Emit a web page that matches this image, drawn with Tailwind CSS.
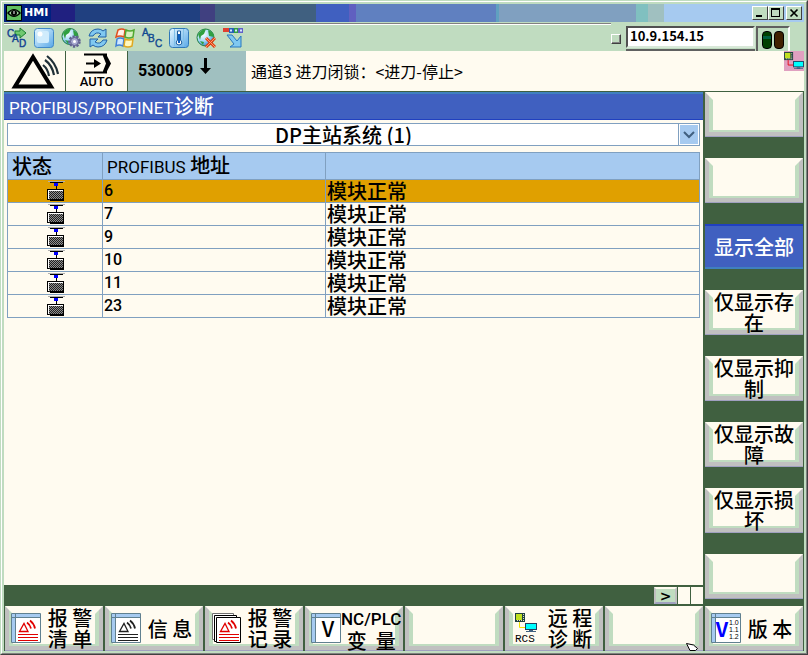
<!DOCTYPE html>
<html lang="zh-CN">
<head>
    <meta charset="UTF-8">
    <meta name="viewport" content="width=device-width, initial-scale=1.0">
    <title>HMI</title>
    <script src="https://cdn.jsdelivr.net/npm/@tailwindcss/browser@4"></script>
</head>
<body class="bg-[#c0dcc0] font-['Noto_Sans_CJK_SC',sans-serif] font-medium text-black">
    <!-- Shared icons -->
    <svg class="absolute w-0 h-0">
        <defs>
            <pattern id="dots" width="2" height="2" patternUnits="userSpaceOnUse">
                <rect width="2" height="2" fill="#909090"/>
                <path d="M0 0h1v1H0zM1 1h1v1H1z" fill="#202020"/>
            </pattern>
            <radialGradient id="globe" cx="0.35" cy="0.3" r="0.8">
                <stop offset="0" stop-color="#ffffff"/>
                <stop offset="0.5" stop-color="#a8dcf8"/>
                <stop offset="1" stop-color="#2070c8"/>
            </radialGradient>
            <linearGradient id="glass" x1="0" y1="0" x2="1" y2="1">
                <stop offset="0" stop-color="#e8f8ff"/>
                <stop offset="1" stop-color="#58a8e8"/>
            </linearGradient>
        </defs>
        <symbol id="device" viewBox="0 0 18 20" shape-rendering="crispEdges">
            <path d="M1 0h17v1H1z" fill="#b0b0b0"/>
            <path d="M3 1h13v1H3zM9 2h1v6H9z" fill="#000"/>
            <path d="M7 2h4v3H7z" fill="#0000ff"/>
            <path d="M0 8h17v11H0z" fill="#000"/>
            <path d="M1 9h15v9H1z" fill="#fff"/>
            <path d="M2 10h14v9H2z" fill="url(#dots)"/>
            <path d="M3 20h14V9h-1v9H3z" fill="#000"/>
        </symbol>
        <symbol id="sheet" viewBox="0 0 30 30">
            <path d="M.5.5h29v29H.5z" fill="#fff" stroke="#608090"/>
            <path d="M1 1h28v3H1zM1 4h3v25H1z" fill="#a6caf0"/>
            <path d="M1 4.500h28M4.500 1v28" stroke="#608090"/>
        </symbol>
        <symbol id="alarm" viewBox="0 0 30 30" fill="none" stroke="currentColor">
            <path d="M8.500 18.500l4.500-8 4 8z" stroke-width="1.300"/>
            <path d="M16 9.500q3 2 4 6M19 7.500q4 3 5 8" stroke-width="1.800"/>
            <path d="M7 21.500h20M7 24.500h20M7 27.500h20" stroke-width="1"/>
        </symbol>
        <symbol id="sheets" viewBox="0 0 30 30">
            <path d="M1.500.500h21v26h-21z" fill="#fff" stroke="#707070"/>
            <path d="M3.500 2.500h22v26h-22z" fill="#fff" stroke="#000"/>
            <path d="M5.500 4.500h24v25h-24z" fill="#fff" stroke="#000"/>
        </symbol>
        <symbol id="network" viewBox="0 0 22 20">
            <path d="M0 0h10v9H0z" fill="#204040"/>
            <path d="M1 1h6v6H1z" fill="#c0e020"/>
            <path d="M8 1h1v1H8zM8 3h1v1H8zM8 5h1v1H8zM2 7h1v1H2zM4 7h1v1H4zM6 7h1v1H6zM8 7h1v1H8z" fill="#e0e0c0"/>
            <path d="M4.500 9v5.500H10" fill="none" stroke="currentColor"/>
            <path d="M10 10h12v7H10z" fill="#204060"/>
            <path d="M11 11h10v5H11z" fill="#00ffff"/>
            <path d="M14 17h4v1h-4zM11 18h10v1H11z" fill="#406080"/>
        </symbol>
    </svg>

    <div class="min-h-screen flex flex-col border border-t-[#c0dcc0] border-l-[#c0dcc0] border-r-[#404040] border-b-[#404040]">
        <div class="flex-1 flex flex-col border border-t-white border-l-white border-r-[#808080] border-b-[#808080] p-0.5">

            <!-- Title bar -->
            <header class="h-[18px] flex items-center justify-between pl-0.5 pr-0.5 bg-[linear-gradient(90deg,#002080_5.9%,#202080_5.9%_8.9%,#204080_8.9%_24.5%,#404080_24.5%_26.4%,#406080_26.4%_39%,#4060c0_39%_43.1%,#6060c0_43.1%_44%,#6080c0_44%_61.5%,#60a0c0_61.5%_61.9%,#80a0c0_61.9%_79%,#80c0c0_79%_80.5%,#a0c0c0_80.5%_82.5%,#a6caf0_82.5%)]">
                <div class="flex items-center gap-0.5">
                    <svg class="w-4 h-4" viewBox="0 0 16 16">
                        <rect width="16" height="16" rx="1" fill="#000"/>
                        <rect x="1" y="1" width="14" height="14" fill="#60c060"/>
                        <path d="M1 8q7-8 14 0q-7 8-14 0z" fill="#000"/>
                        <path d="M3 8q5-6 10 0q-5 6-10 0z" fill="#a0d8a0"/>
                        <circle cx="8" cy="8" r="3" fill="#000"/>
                        <path d="M8 6v3" stroke="#fff"/>
                    </svg>
                    <h1 class="font-['DejaVu_Sans',sans-serif] text-[11px] font-bold text-white">HMI</h1>
                </div>
                <div class="flex">
                    <button aria-label="Minimize" class="w-4 h-3.5 bg-[#c0dcc0] border border-t-white border-l-white border-r-[#404040] border-b-[#404040]">
                        <svg class="w-full h-full" viewBox="0 0 14 12"><path d="M3 8h6v2H3z"/></svg>
                    </button>
                    <button aria-label="Maximize" class="w-4 h-3.5 bg-[#c0dcc0] border border-t-white border-l-white border-r-[#404040] border-b-[#404040]">
                        <svg class="w-full h-full" viewBox="0 0 14 12"><path d="M2 1h9v9H2zM3 3v6h7V3z" fill-rule="evenodd"/></svg>
                    </button>
                    <button aria-label="Close" class="w-4 h-3.5 ml-0.5 bg-[#c0dcc0] border border-t-white border-l-white border-r-[#404040] border-b-[#404040]">
                        <svg class="w-full h-full" viewBox="0 0 14 12"><path d="M3.500 2.500l7 7m0-7l-7 7" stroke="#000" stroke-width="1.700"/></svg>
                    </button>
                </div>
            </header>

            <!-- Toolbar -->
            <div class="flex h-[29px] pr-3.5">
                <div class="flex-1 flex flex-col">
                    <div class="mt-px h-0.5 border-t border-b border-t-[#808080] border-b-white"></div>
                    <div class="flex items-center gap-[7px] pl-[3px] pt-[3px]">
                        <button aria-label="CAD">
                            <svg class="w-5 h-5 overflow-visible" viewBox="0 0 20 20">
                                <path d="M8 3h5V0l6 5-6 5V7H8z" fill="#70c870" stroke="#188030"/>
                                <g font-family="Liberation Sans" font-size="10" fill="#104090" stroke="#104090" stroke-width=".4"><text x="0" y="9">C</text><text x="5" y="14">A</text><text x="12" y="19">D</text></g>
                            </svg>
                        </button>
                        <button aria-label="Screen">
                            <svg class="w-5 h-5" viewBox="0 0 20 20">
                                <rect x=".5" y=".5" width="19" height="19" rx="3" fill="url(#glass)" stroke="#4088c8"/>
                                <rect x="3" y="3" width="12" height="12" rx="2" fill="#d0ecfc"/>
                                <circle cx="6" cy="6" r="2.500" fill="#fff"/>
                            </svg>
                        </button>
                        <button aria-label="Network settings">
                            <svg class="w-5 h-5" viewBox="0 0 20 20">
                                <circle cx="9" cy="8.500" r="8" fill="url(#globe)" stroke="#208040"/>
                                <path d="M2 5q4-5 8-4l-2 4-3 2-1 4zM12 2q5 2 5 7l-4-1zM4 12l4 1-1 3z" fill="#30a040"/>
                                <circle cx="13.500" cy="13.500" r="5" fill="#a0a0c8" stroke="#606090" stroke-width="2.500" stroke-dasharray="2.200 1.300"/>
                                <circle cx="13.500" cy="13.500" r="4" fill="#a8a8d0" stroke="#606090"/>
                                <circle cx="13.500" cy="13.500" r="1.500" fill="#fff"/>
                            </svg>
                        </button>
                        <button aria-label="Refresh">
                            <svg class="w-5 h-5" viewBox="0 0 20 20" fill="#80c8f0" stroke="#2060a8">
                                <path d="M1 8Q3 1 10 1q3 0 5 2l3-2v8h-8l3-3Q8 3 5 8z"/>
                                <path d="M19 12q-2 7-9 7-3 0-5-2l-3 2v-8h8l-3 3q5 3 8-2z"/>
                            </svg>
                        </button>
                        <button aria-label="Windows">
                            <svg class="w-5 h-5" viewBox="0 0 20 20" stroke-width="1.500">
                                <path d="M3 2q4-2 7 0L9 9Q5 7 1 9z" fill="#fff0e8" stroke="#e05020"/>
                                <path d="M11 2q4 2 8 0l-1 7q-4 2-8 0z" fill="#d8f0c0" stroke="#50a830"/>
                                <path d="M2 11q3-2 7 0l-1 7q-4-2-7 0z" fill="#d0e8ff" stroke="#4080d8"/>
                                <path d="M10 11q4 2 8 0l-1 7q-4 2-8 0z" fill="#fff8c0" stroke="#e0a820"/>
                            </svg>
                        </button>
                        <button aria-label="ABC">
                            <svg class="w-5 h-5 overflow-visible" viewBox="0 0 20 20">
                                <g font-family="Liberation Sans" font-size="10" fill="#104890" stroke="#104890" stroke-width=".4"><text x="0" y="8">A</text><text x="6" y="14">B</text><text x="13" y="19">C</text></g>
                            </svg>
                        </button>
                        <button aria-label="Temperature">
                            <svg class="w-5 h-5" viewBox="0 0 20 20">
                                <rect x=".5" y=".5" width="19" height="19" rx="3" fill="url(#glass)" stroke="#3078b8"/>
                                <path d="M5.500 1v17M14.500 1v17" stroke="#80c0e8"/>
                                <path d="M8.500 3h3v9q2 2 1 4-2.500 2-5 0-1-2 1-4z" fill="#fff" stroke="#2060a0"/>
                                <path d="M10 6v9" stroke="#1060c0" stroke-width="2"/>
                            </svg>
                        </button>
                        <button aria-label="Disconnect">
                            <svg class="w-5 h-5" viewBox="0 0 20 20">
                                <circle cx="9.500" cy="9.500" r="8.500" fill="url(#globe)" stroke="#208040"/>
                                <path d="M2 6q4-5 8-5l-2 5-3 2-1 4zM12 2q6 2 6 7l-5-1zM4 13l4 1-1 3z" fill="#30a040"/>
                                <path d="M10 10l9 9m0-9l-9 9" stroke="#e04010" stroke-width="3"/>
                                <path d="M10 10l9 9m0-9l-9 9" stroke="#ff9870" stroke-width="1"/>
                            </svg>
                        </button>
                        <button aria-label="Transfer">
                            <svg class="w-5 h-5" viewBox="0 0 20 20">
                                <path d="M0 0h6v4H0z" fill="#e04030"/><path d="M6 0h5v5H6z" fill="#2860b8"/><path d="M11 0h4v5h-4z" fill="#30a040"/><path d="M15 0h5v5h-5z" fill="#6060c8"/>
                                <path d="M7 1.500h2v2H7zM12 1.500h2v2h-2zM17 1.500h2v2h-2z" fill="#d8e8ff"/>
                                <path d="M4 7h5l5 6 4-5v11H7l4-3z" fill="#80c8f0" stroke="#2878c0"/>
                            </svg>
                        </button>
                    </div>
                </div>
                <div class="flex items-center pt-1">
                    <input type="checkbox" aria-label="Link" class="appearance-none size-2.5 mr-[5px] bg-[#c0dcc0] border border-t-white border-l-white border-r-[#404040] border-b-[#404040] shadow-[inset_-1px_-1px_#808080]">
                    <div class="self-stretch border-b-2 border-[#606060]">
                        <input type="text" value="10.9.154.15" aria-label="IP address" class="block w-[129px] h-[22px] pb-1 pl-0.5 bg-white border-2 border-t-[#505050] border-l-[#505050] border-r-[#d8e8d8] border-b-[#d8e8d8] text-[13px] leading-4 font-bold">
                    </div>
                    <div class="self-stretch ml-px w-[34px] flex justify-center items-center gap-0.5 border-2 border-b-0 border-t-[#606060] border-l-[#606060] border-r-white">
                        <span class="w-2.5 h-[18px] rounded-sm border border-black bg-[linear-gradient(#004000_25%,#006040_25%_45%,#004000_45%)]"></span>
                        <span class="w-2.5 h-[18px] rounded-sm border border-black bg-[#402000]"></span>
                    </div>
                </div>
            </div>

            <!-- Channel status -->
            <div class="flex h-[41px] bg-[#fffbf0] border-b border-[#406040]">
                <div class="w-[62px] border-r border-[#406040] flex items-center justify-center">
                    <svg class="w-12 h-9" viewBox="0 0 48 36" fill="none" stroke="#000">
                        <path d="M4 33.500L22 4l18 29.500z" stroke-width="4"/>
                        <path d="M32 12q5 4 6 11M34 7q7 5 9 15M36 3q9 7 11 18" stroke-width="2.200" stroke="#203038"/>
                    </svg>
                </div>
                <div class="w-[62px] border-r border-[#406040] flex flex-col items-center pt-0.5">
                    <svg class="w-7 h-[21px]" viewBox="0 0 28 21">
                        <path d="M1 1.500h19l3 0v18H1" fill="none" stroke="#000" stroke-width="2"/>
                        <path d="M20 1h3l5 9.500L23 20h-3z"/>
                        <path d="M20 3v15l3-7.500z" fill="#fffbf0"/>
                        <path d="M3 9.500h8V6l7 4.500-7 4.500v-3.500H3z"/>
                    </svg>
                    <span class="font-['Roboto',sans-serif] text-[13px] leading-4">AUTO</span>
                </div>
                <div class="w-[118px] bg-[#a0c0c0] flex items-center pl-2.5 gap-1.5">
                    <span class="font-['Roboto',sans-serif] text-base font-bold">530009</span>
                    <svg class="w-3 h-[18px] mb-2.5" viewBox="0 0 12 18"><path d="M5 1h3v10h4l-5.500 6L1 11h4z"/></svg>
                </div>
                <p class="flex-1 pl-[5px] text-base leading-10 font-normal">通道3 进刀闭锁：&lt;进刀-停止&gt;</p>
                <div class="w-5 h-5 bg-[#e0a0c0] pt-px">
                    <svg class="w-5 h-[18px] text-red-600"><use href="#network" width="20" height="18"/></svg>
                </div>
            </div>

            <div class="flex-1 flex bg-[#406040]">
                <main class="flex-1 flex flex-col mr-px">
                    <h2 class="h-7 border-t-2 border-b border-t-[#4080c0] border-b-[#2040c0] bg-[#4060c0] pl-[5px] text-xl leading-6 text-white"><span class="font-['Roboto',sans-serif] text-[17px] font-normal">PROFIBUS/PROFINET</span>诊断</h2>
                    <div class="flex-1 bg-[#fffbf0] px-[3px] pt-[3px]">
                        <div class="relative">
                            <select aria-label="DP" class="appearance-none block w-full h-[23px] pr-5 bg-white border border-[#80a0c0] text-xl leading-5 text-center [text-align-last:center]">
                                <option>DP主站系统 (1)</option>
                            </select>
                            <span class="pointer-events-none absolute right-0 inset-y-0 w-[22px] border border-[#80a0c0] bg-[#a6caf0] shadow-[inset_0_0_0_1px_white] flex items-center justify-center">
                                <svg class="w-3 h-2" viewBox="0 0 12 8"><path d="M1 1l5 5 5-5" fill="none" stroke="#406080" stroke-width="2"/></svg>
                            </span>
                        </div>
                        <table class="mt-1.5 w-full table-fixed border-collapse border border-[#80a0c0]">
                            <colgroup><col class="w-[95px]"><col class="w-[223px]"><col></colgroup>
                            <thead>
                                <tr class="h-[27px] bg-[#a6caf0] text-left text-xl leading-5">
                                    <th class="border border-[#80a0c0] pl-1 font-medium">状态</th>
                                    <th class="border border-[#80a0c0] pl-1 font-medium"><span class="font-['Roboto',sans-serif] text-[17px] font-normal">PROFIBUS</span> 地址</th>
                                    <th class="border border-[#80a0c0]"></th>
                                </tr>
                            </thead>
                            <tbody id="slaves"></tbody>
                        </table>
                    </div>
                    <div class="h-[21px] bg-[#406040] flex items-center justify-end gap-px">
                        <button class="w-[23px] h-[17px] bg-[#c0dcc0] border-2 border-t-[#fffbf0] border-l-[#c0c0c0] border-r-[#c0c0c0] border-b-[#a0a0c0] font-['DejaVu_Sans',sans-serif] text-sm leading-3 font-bold">&gt;</button>
                        <span class="w-3 h-[17px] bg-[#fffbf0]"></span>
                        <span class="w-3 h-[17px] bg-[#fffbf0]"></span>
                    </div>
                </main>
                <nav id="side-keys" class="w-1/8 flex flex-col gap-[21px] px-px pb-[7px]"></nav>
            </div>

            <nav id="bottom-keys" class="grid grid-cols-8 gap-0.5 px-px bg-[#406040]"></nav>
        </div>
    </div>

    <!-- Mouse pointer -->
    <svg class="absolute left-[686px] top-[643px] w-3 h-2" viewBox="0 0 12 8"><path d="M.5.500l7 1.500 4 3.500-2 2H4z" fill="#fff" stroke="#000"/></svg>

    <script>
        const keyClass = "relative w-full h-[45px] flex items-center bg-[#fffbf0] border-4 border-b-[5px] border-t-[#fffbf0] border-x-[#c0c0c0] border-b-[#c0c0c0] text-xl leading-[21px] before:absolute before:inset-0 before:border-4 before:border-b-2 before:border-t-[#fffbf0] before:border-x-[#c0dcc0] before:border-b-[#c0dcc0] after:absolute after:-inset-x-1 after:-bottom-[5px] after:h-px after:bg-[#a0a0c0]";
        const activeClass = "w-full h-[45px] bg-[#4060c0] border-y-2 border-t-[#2040c0] border-b-[#4080c0] text-xl text-white";

        const slaves = [6, 7, 9, 10, 11, 23];
        const sideKeys = ['', '', '显示全部', '仅显示存在', '仅显示抑制', '仅显示故障', '仅显示损坏', ''];
        const icons = {
            alarmList: '<use href="#sheet"/><use href="#alarm" color="#e00000"/>',
            info: '<use href="#sheet"/><use href="#alarm" color="#202020"/>',
            alarmLog: '<use href="#sheets"/><use href="#alarm" color="#e00000" x="1"/>',
            variable: '<use href="#sheet"/><text x="17" y="24" text-anchor="middle" font-size="21">V</text>',
            remote: '<use href="#network" color="#f0e000" x="4" width="22" height="20"/><text x="4" y="29" font-size="11" font-family="Liberation Mono" font-weight="400">RCS</text>',
            version: '<use href="#sheet"/><text x="11" y="24" text-anchor="middle" font-size="20" font-weight="700" fill="#0000ff">V</text><g font-size="7" font-family="Liberation Sans" font-weight="400"><text x="18" y="12">1.0</text><text x="18" y="19">1.1</text><text x="18" y="26">1.2</text></g>',
        };
        const bottomKeys = [
            { icon: 'alarmList', label: '报 警\n清 单' },
            { icon: 'info', label: '信 息' },
            { icon: 'alarmLog', label: '报 警\n记 录' },
            { icon: 'variable', label: `<span class="font-['Roboto',sans-serif] text-[17px]">NC/PLC</span>\n变  量` },
            { label: '' },
            { icon: 'remote', label: '远 程\n诊 断' },
            { label: '' },
            { icon: 'version', label: '版 本' },
        ];

        document.getElementById('slaves').innerHTML = slaves.map((address, i) => `
            <tr class="h-[23px] border-b border-[#80a0c0] ${i === 0 ? 'bg-[#e0a000]' : ''}">
                <td class="border-r border-[#80a0c0] pl-0.5"><svg class="mx-auto w-[18px] h-5"><use href="#device"/></svg></td>
                <td class="border-r border-[#80a0c0] pl-px font-['Roboto',sans-serif] text-base leading-5">${address}</td>
                <td class="pl-px text-xl leading-5">模块正常</td>
            </tr>
        `).join('');

        document.getElementById('side-keys').innerHTML = sideKeys.map(label => `
            <button class="${label === '显示全部' ? activeClass : keyClass}"><span class="relative z-10 w-full">${label}</span></button>
        `).join('');

        document.getElementById('bottom-keys').innerHTML = bottomKeys.map(key => `
            <button class="${keyClass} pl-0.5">
                ${key.icon ? `<svg class="relative z-10 shrink-0 w-[30px] h-[30px]" viewBox="0 0 30 30">${icons[key.icon]}</svg>` : ''}
                <span class="relative z-10 flex-1 whitespace-pre">${key.label}</span>
            </button>
        `).join('');
    </script>
</body>
</html>
